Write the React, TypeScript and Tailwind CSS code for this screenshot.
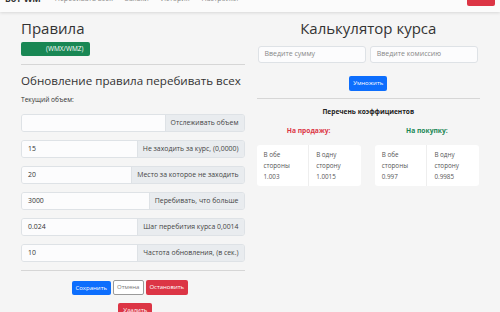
const fields = [
  { value: '', label: 'Отслеживать объем' },
  { value: '15', label: 'Не заходить за курс, (0,0000)' },
  { value: '20', label: 'Место за которое не заходить' },
  { value: '3000', label: 'Перебивать, что больше' },
  { value: '0.024', label: 'Шаг перебития курса 0,0014' },
  { value: '10', label: 'Частота обновления, (в сек.)' },
];

const coefs = [
  {
    title: 'На продажу:',
    color: 'text-[#dc3545]',
    both: '1.003',
    one: '1.0015',
  },
  {
    title: 'На покупку:',
    color: 'text-[#198754]',
    both: '0.997',
    one: '0.9985',
  },
];

const App: React.FC = () => (
  <div
    className="w-[500px] h-[312px] overflow-hidden bg-[#f5f5f5] text-[#212529]"
    style={{ fontFamily: '"Open Sans", "Noto Sans", sans-serif' }}
  >
    {/* Navbar (page is scrolled, only its lower edge shows) */}
    <div className="-mt-[10px] h-[22px] bg-[#fbfbfb] shadow-[0_1px_3px_rgba(0,0,0,0.12)] flex items-start px-[5px] text-[7px] leading-[14px]">
      <span className="pt-[2px] font-bold text-[9px] text-[#333]">Бот WM</span>
      <div className="pt-[2px] flex gap-[12px] ml-[14px] text-[#8a8a8a]">
        <span>Перебивать всех</span>
        <span>Заявки</span>
        <span>История</span>
        <span>Настройки</span>
      </div>
      <div className="ml-auto h-[16px] w-[28px] rounded-[2px] bg-[#dc3545]" />
    </div>

    <div className="flex gap-[12px] pl-[21px] pr-[20px]">
      {/* Left column */}
      <div className="flex-1 basis-0 min-w-0 flex flex-col">
        <h1 className="mt-[7px] text-[15px] leading-[18px] text-[#333]">Правила</h1>
        <button className="mt-[5px] w-[69px] h-[14px] rounded-[2px] bg-[#198754] text-white text-[6.5px] pl-[25px] text-left whitespace-nowrap">
          (WMX/WMZ)
        </button>
        <div className="mt-[8px] border-t border-[#d6d6d6]" />
        <h2 className="mt-[8px] text-[11.6px] leading-[15px] text-[#333] whitespace-nowrap">
          Обновление правила перебивать всех
        </h2>
        <div className="mt-[8px] text-[6.6px] leading-[8px] text-[#333]">Текущий объем:</div>
        <div className="mt-[10px] flex flex-col gap-[8px]">
          {fields.map((f) => (
            <div
              key={f.label}
              className="flex h-[18px] rounded-[3px] border border-[#dee2e6] overflow-hidden text-[6.9px]"
            >
              <div className="flex-1 bg-[#fcfcfd] flex items-center px-[6px] text-[#333]">{f.value}</div>
              <div className="bg-[#e9ecef] border-l border-[#dee2e6] flex items-center px-[5px] text-[#444] whitespace-nowrap">
                {f.label}
              </div>
            </div>
          ))}
        </div>
        <div className="mt-[8px] border-t border-[#d6d6d6]" />
        <div className="mt-[10px] flex justify-center gap-[2px] text-[6px] pr-[6px]">
          <button className="h-[14px] w-[39px] rounded-[2px] bg-[#0d6efd] text-white">Сохранить</button>
          <button className="-mt-[1px] h-[15px] w-[31px] rounded-[2px] border border-[#9a9a9a] bg-white text-[#777]">
            Отмена
          </button>
          <button className="-mt-[1px] h-[15px] w-[42px] rounded-[2px] bg-[#dc3545] text-white">Остановить</button>
        </div>
        <div className="mt-[8px] flex justify-center pl-[5px]">
          <button className="h-[14px] w-[34px] rounded-[2px] bg-[#dc3545] text-white text-[6px]">Удалить</button>
        </div>
      </div>

      {/* Right column */}
      <div className="flex-1 basis-0 min-w-0 flex flex-col">
        <h1 className="mt-[7px] text-center text-[15px] leading-[18px] text-[#333]">Калькулятор курса</h1>
        <div className="mt-[9px] flex gap-[4px] pl-[1px] pr-[2px]">
          <div className="flex-1 h-[17px] rounded-[3px] border border-[#dee2e6] bg-[#fcfcfd] flex items-center px-[6px] text-[7px] text-[#888]">
            Введите сумму
          </div>
          <div className="flex-1 h-[17px] rounded-[3px] border border-[#dee2e6] bg-[#fcfcfd] flex items-center px-[6px] text-[7px] text-[#888]">
            Введите комиссию
          </div>
        </div>
        <div className="mt-[13px] flex justify-center">
          <button className="h-[15px] w-[38px] rounded-[2px] bg-[#0d6efd] text-white text-[6px]">Умножить</button>
        </div>
        <div className="mt-[7px] border-t border-[#d6d6d6]" />
        <div className="mt-[8px] text-center font-bold text-[6.6px] leading-[10px] text-[#222]">
          Перечень коэффициентов
        </div>
        <div className="mt-[9px] grid grid-cols-2 gap-[14px] pr-[1px]">
          {coefs.map((c) => (
            <div key={c.title} className="flex flex-col">
              <div className={`text-center font-bold text-[6.7px] leading-[10px] ${c.color}`}>{c.title}</div>
              <div className="mt-[9px] h-[41px] bg-white rounded-[3px] flex text-[6.3px] leading-[11px] text-[#555]">
                <div className="flex-1 pl-[7px] pt-[4px] border-r border-[#eeeeee]">
                  <div>В обе</div>
                  <div>стороны</div>
                  <div>{c.both}</div>
                </div>
                <div className="flex-1 pl-[7px] pt-[4px]">
                  <div>В одну</div>
                  <div>сторону</div>
                  <div>{c.one}</div>
                </div>
              </div>
            </div>
          ))}
        </div>
      </div>
    </div>
  </div>
);

export default App;
